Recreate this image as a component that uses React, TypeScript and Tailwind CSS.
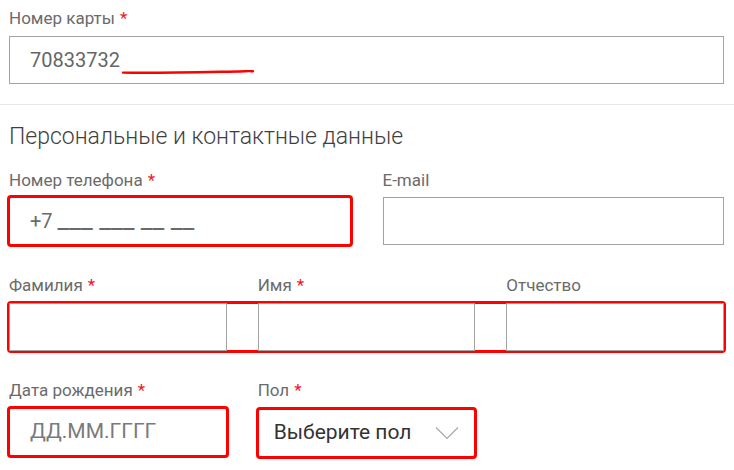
import type { ReactNode } from 'react'

const font = { fontFamily: 'Roboto, "Noto Sans", sans-serif' }

function Label({ text, required }: { text: string; required?: boolean }) {
  return (
    <p className="h-[20px] text-[17px] leading-[20px] text-[#6b6b6b]">
      {text}
      {required && <span className="ml-[5px] text-[#f0141e]">*</span>}
    </p>
  )
}

function Box({
  children,
  marked,
  className = 'pl-[20px]',
}: {
  children?: ReactNode
  marked?: boolean
  className?: string
}) {
  return (
    <div
      className={`relative flex h-[48px] items-center border border-[#a3a3a3] bg-white text-[20px] ${
        marked ? 'rounded-[2px] outline-[3px] outline-offset-[-1px] outline-[#ff0000]' : ''
      } ${className}`}
    >
      {children}
    </div>
  )
}

export default function App() {
  return (
    <div style={font} className="h-[470px] w-[734px] overflow-hidden bg-white">
      <section className="border-b border-[#e6e6e6] pb-[20px] pl-[9px] pr-[10px] pt-[8px]">
        <Label text="Номер карты" required />
        <Box className="mt-[8px] pl-[20px] text-[#666]">
          <span>70833732</span>
          <svg
            width="134"
            height="6"
            viewBox="0 0 134 6"
            className="absolute left-[111px] top-[32px]"
          >
            <path
              d="M2 3.6 C 30 4.2, 70 3.4, 100 2.8 S 125 1.9, 132 2.2"
              fill="none"
              stroke="#ff0000"
              strokeWidth="2.4"
              strokeLinecap="round"
            />
          </svg>
        </Box>
      </section>

      <section className="pl-[9px] pr-[10px]">
        <h2 className="mt-[18px] text-[23px] font-light leading-[28px] text-[#3f3f3f]">
          Персональные и контактные данные
        </h2>

        <div className="mt-[19px] grid grid-cols-2 gap-x-[32px]">
          <div>
            <Label text="Номер телефона" required />
            <Box marked className="mt-[7px] pl-[20px] text-[#6a6a6a]">
              <span>
                +7{' '}
                <span className="text-[26px] leading-none">___ ___ __ __</span>
              </span>
            </Box>
          </div>
          <div>
            <Label text="E-mail" />
            <Box className="mt-[7px]" />
          </div>
        </div>

        <div className="mt-[30px] grid grid-cols-3 gap-x-[31px]">
          <Label text="Фамилия" required />
          <Label text="Имя" required />
          <Label text="Отчество" />
        </div>
        <div className="mt-[8px] grid grid-cols-3 gap-x-[31px] rounded-[2px] outline-[3px] outline-offset-[-1px] outline-[#ff0000]">
          <Box />
          <Box />
          <Box />
        </div>

        <div className="mt-[29px] grid grid-cols-3 gap-x-[31px]">
          <div>
            <Label text="Дата рождения" required />
            <Box marked className="mt-[8px] pl-[20px] text-[21px] text-[#7a7a7a]">
              <span>ДД.ММ.ГГГГ</span>
            </Box>
          </div>
          <div>
            <Label text="Пол" required />
            <Box marked className="mt-[9px] justify-between pl-[15px] pr-[15px] text-[21px] text-[#333]">
              <span>Выберите пол</span>
              <svg width="24" height="14" viewBox="0 0 24 14">
                <polyline
                  points="1,1.5 12,12.5 23,1.5"
                  fill="none"
                  stroke="#a8a8a8"
                  strokeWidth="1.2"
                />
              </svg>
            </Box>
          </div>
        </div>
      </section>
    </div>
  )
}
